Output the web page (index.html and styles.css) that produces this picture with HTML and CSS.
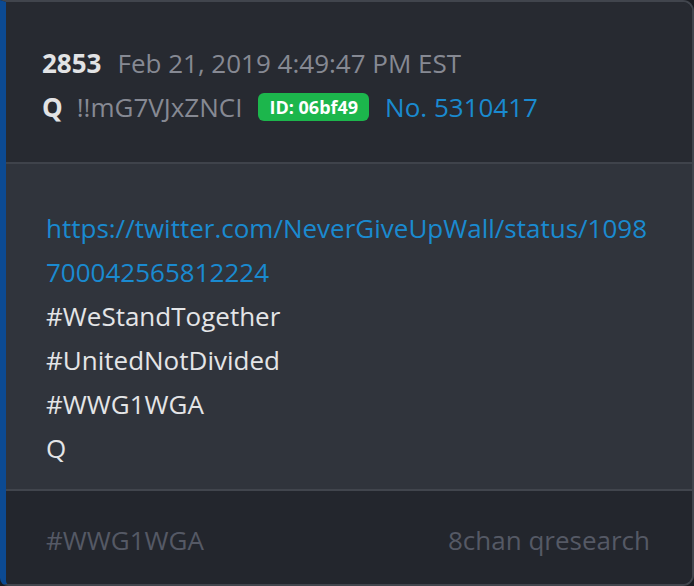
FILE: index.html
```html
<!DOCTYPE html>
<html>
<head>
<meta charset="utf-8">
<link rel="stylesheet" href="styles.css">
</head>
<body>
<div class="card">
  <div class="head">
    <div class="line"><span class="num">2853</span><span class="date">Feb 21, 2019 4:49:47 PM EST</span></div>
    <div class="line"><span class="name">Q</span><span class="trip">!!mG7VJxZNCI</span><span class="id">ID: 06bf49</span><a class="no">No. 5310417</a></div>
  </div>
  <div class="body">
    <a class="link">https://twitter.com/NeverGiveUpWall/status/1098700042565812224</a>
    <div>#WeStandTogether</div>
    <div>#UnitedNotDivided</div>
    <div>#WWG1WGA</div>
    <div>Q</div>
  </div>
  <div class="foot">
    <span>#WWG1WGA</span>
    <span>8chan qresearch</span>
  </div>
</div>
</body>
</html>
```

FILE: styles.css
```css
html, body {
  margin: 0;
  padding: 0;
  background: #1b1d22;
}
body {
  font-family: "Open Sans", sans-serif;
  font-size: 26px;
  line-height: 44px;
  width: 694px;
  height: 586px;
  overflow: hidden;
}
.card {
  width: 686px;
  height: 582px;
  border-left: 6px solid #0c4a92;
  border-top: 2px solid #41454d;
  border-right: 2px solid #41454d;
  border-bottom: 2px solid #41454d;
  border-radius: 0 11px 11px 8px;
  background: #23262d;
  overflow: hidden;
  display: flex;
  flex-direction: column;
}
.head {
  background: #272a31;
  padding: 39px 0 33px 36px;
  border-bottom: 2px solid #3f434b;
}
.line {
  display: flex;
  align-items: center;
}
.num {
  color: #e2e3e5;
  font-weight: 700;
  margin-right: 16px;
}
.name {
  color: #e2e3e5;
  font-weight: 700;
  margin-right: 14px;
}
.date, .trip {
  color: #868993;
}
.trip {
  margin-right: 16px;
}
.id {
  background: #1cb64c;
  color: #ffffff;
  font-weight: 700;
  font-size: 18px;
  line-height: 28px;
  padding: 0 11px;
  border-radius: 6px;
  margin-right: 16px;
}
.no {
  color: #1a8ad0;
}
.body {
  background: #30343c;
  padding: 42px 38px 19px 40px;
  color: #e4e5e7;
  border-bottom: 2px solid #41454d;
}
.link {
  display: block;
  color: #1a8ad0;
  word-break: break-all;
}
.foot {
  flex: 1;
  background: #23262d;
  padding: 27px 42px 0 40px;
  display: flex;
  justify-content: space-between;
  color: #555965;
}
```
